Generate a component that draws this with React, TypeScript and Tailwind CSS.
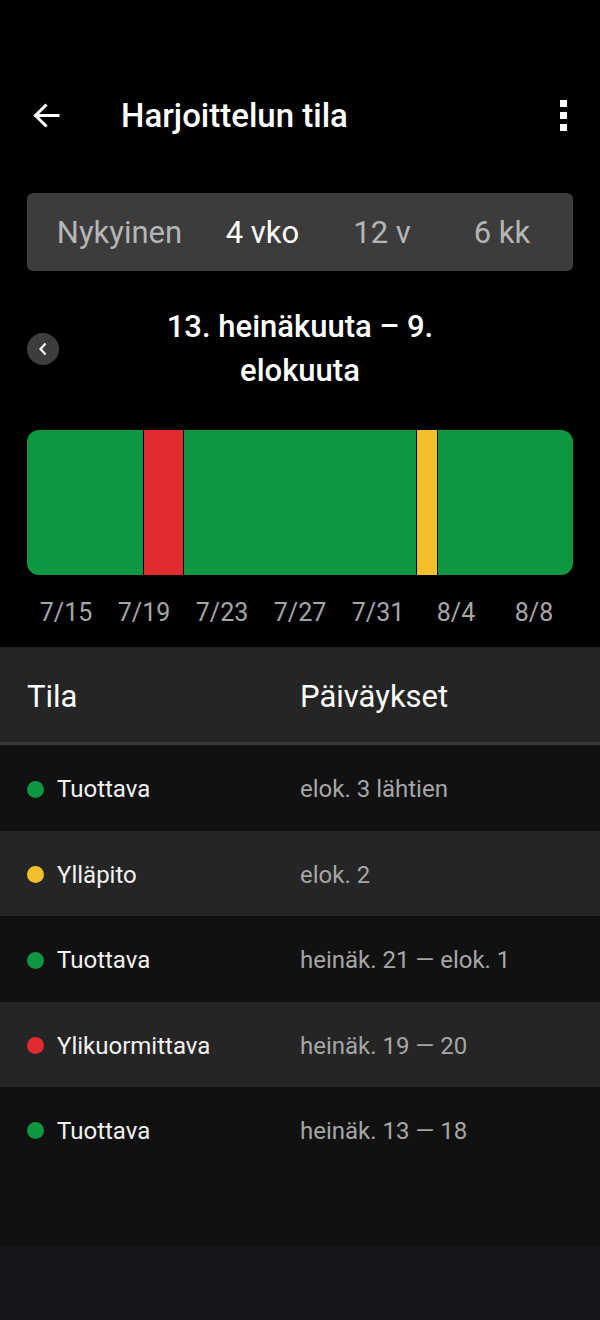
import React from 'react';

type Row = { status: string; dates: string; dot: string };

const segments = [
    { days: 6, color: 'bg-[#0f9641]' },
    { days: 2, color: 'bg-[#e12b30] border-x border-black' },
    { days: 12, color: 'bg-[#0f9641]' },
    { days: 1, color: 'bg-[#f5bf2b] border-x border-black' },
    { days: 7, color: 'bg-[#0f9641]' },
];

const axisLabels = ['7/15', '7/19', '7/23', '7/27', '7/31', '8/4', '8/8'];

const rows: Row[] = [
    { status: 'Tuottava', dates: 'elok. 3 lähtien', dot: 'bg-[#0f9641]' },
    { status: 'Ylläpito', dates: 'elok. 2', dot: 'bg-[#f5bf2b]' },
    { status: 'Tuottava', dates: 'heinäk. 21 — elok. 1', dot: 'bg-[#0f9641]' },
    { status: 'Ylikuormittava', dates: 'heinäk. 19 — 20', dot: 'bg-[#e12b30]' },
    { status: 'Tuottava', dates: 'heinäk. 13 — 18', dot: 'bg-[#0f9641]' },
];

const rowHeights = ['h-[86px]', 'h-[85px]', 'h-[86px]', 'h-[85px]', 'h-[85px]'];

export default function App() {
    return (
        <div
            className="w-full min-h-[1320px] bg-black flex flex-col text-white"
            style={{ fontFamily: 'Roboto, "Noto Sans", sans-serif' }}
        >
            {/* header */}
            <div className="mt-[88px] h-[54px] flex items-center pl-[33px] pr-[33px]">
                <svg width="27" height="25" viewBox="0 0 27 25" fill="none" stroke="white" strokeWidth="3" strokeLinecap="square">
                    <path d="M3 12.5 H25" />
                    <path d="M12.5 2.5 L2.5 12.5 L12.5 22.5" strokeLinejoin="miter" />
                </svg>
                <h1 className="ml-[61px] text-[33px] font-medium leading-none">Harjoittelun tila</h1>
                <div className="ml-auto flex flex-col gap-[5px]">
                    <span className="w-[7px] h-[7px] bg-white" />
                    <span className="w-[7px] h-[7px] bg-white" />
                    <span className="w-[7px] h-[7px] bg-white" />
                </div>
            </div>

            {/* range selector */}
            <div className="mt-[51px] mx-[27px] h-[78px] rounded-[6px] bg-[#3c3c3c] grid grid-cols-[185px_101px_138px_102px] items-center text-[31px] leading-none">
                <span className="text-center text-[#b5b5b5]">Nykyinen</span>
                <span className="text-center text-white">4 vko</span>
                <span className="text-center text-[#b5b5b5]">12 v</span>
                <span className="text-center text-[#b5b5b5]">6 kk</span>
            </div>

            {/* period */}
            <div className="mt-[34px] px-[27px] grid grid-cols-[32px_1fr_32px] items-center">
                <button className="w-[32px] h-[32px] rounded-full bg-[#3d3d3d] flex items-center justify-center">
                    <svg width="10" height="14" viewBox="0 0 10 14" fill="none" stroke="white" strokeWidth="2.2">
                        <path d="M7.5 1.5 L2.5 7 L7.5 12.5" />
                    </svg>
                </button>
                <div className="flex justify-center">
                    <p className="w-[300px] text-center text-[31px] font-medium leading-[44px]">
                        13. heinäkuuta – 9. elokuuta
                    </p>
                </div>
                <div />
            </div>

            {/* status chart */}
            <div className="mt-[37px] mx-[27px] h-[145px] rounded-[12px] overflow-hidden flex">
                {segments.map((s, i) => (
                    <div key={i} className={s.color} style={{ flexGrow: s.days, flexBasis: 0 }} />
                ))}
            </div>
            <div className="mt-[24px] mx-[27px] grid grid-cols-7 text-[25px] leading-[28px] text-[#a6a6a6]">
                {axisLabels.map((l) => (
                    <span key={l} className="text-center">{l}</span>
                ))}
            </div>

            {/* table */}
            <div className="mt-[20px] h-[95px] bg-[#252525] grid grid-cols-[273px_1fr] items-center pl-[27px] pt-[5px] text-[31px]">
                <span>Tila</span>
                <span>Päiväykset</span>
            </div>
            <div className="h-[3px] bg-[#3a3a3a]" />
            {rows.map((r, i) => (
                <div
                    key={i}
                    className={`${rowHeights[i]} ${i % 2 === 1 ? 'bg-[#252525]' : 'bg-[#111111]'} grid grid-cols-[273px_1fr] items-center pl-[27px] pt-[2px] text-[24px]`}
                >
                    <div className="flex items-center gap-[13px]">
                        <span className={`w-[17px] h-[17px] rounded-full ${r.dot}`} />
                        <span className="text-[#f2f2f2]">{r.status}</span>
                    </div>
                    <span className="text-[#a6a6a6]">{r.dates}</span>
                </div>
            ))}
            <div className="h-[74px] bg-[#111111]" />
            <div className="flex-1 bg-[#16171b]" />
        </div>
    );
}
